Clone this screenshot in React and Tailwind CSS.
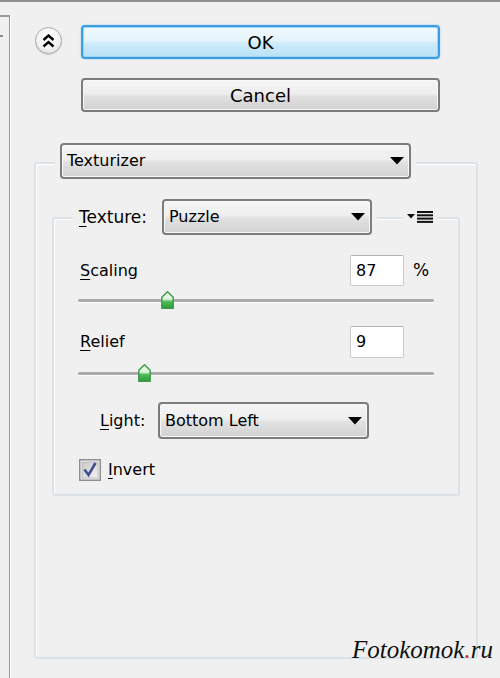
import React from "react";

const font = { fontFamily: '"DejaVu Sans", Verdana, sans-serif' };

function Arrow() {
  return (
    <svg width="14" height="8" viewBox="0 0 14 8" className="shrink-0">
      <path d="M0 0 H14 L7 7.5 Z" fill="#000" />
    </svg>
  );
}

function Select({ label, className }) {
  return (
    <div
      className={`flex items-center justify-between rounded-[4px] border-2 border-[#7c7c7c] bg-[linear-gradient(to_bottom,#f5f5f5_0%,#eeeeee_45%,#e0e0e0_55%,#d3d3d3_100%)] pl-[5px] pr-[5px] text-[16px] text-black shadow-[inset_0_0_0_1px_#f8f8f8] ${className}`}
    >
      <span className="leading-none">{label}</span>
      <Arrow />
    </div>
  );
}

function Thumb() {
  return (
    <svg width="13" height="18" viewBox="0 0 13 18">
      <defs>
        <linearGradient id="tg" x1="0" y1="0" x2="0" y2="1">
          <stop offset="0" stopColor="#f4fff4" />
          <stop offset="0.45" stopColor="#d8f2d8" />
          <stop offset="0.6" stopColor="#4dbb58" />
          <stop offset="1" stopColor="#2f9a3c" />
        </linearGradient>
      </defs>
      <path d="M6.5 0.8 L12.2 6.2 V17.2 H0.8 V6.2 Z" fill="url(#tg)" stroke="#3a9a45" strokeWidth="1.4" strokeLinejoin="round" />
    </svg>
  );
}

function Slider({ thumbClass }) {
  return (
    <div className="relative ml-[24px] flex h-[18px] w-[356px] items-center">
      <div className="h-[3px] w-full rounded-full bg-[#ababab] shadow-[0_1px_0_#ffffff]" />
      <div className={`absolute top-0 ${thumbClass}`}>
        <Thumb />
      </div>
    </div>
  );
}

function U({ c }) {
  return <span className="underline decoration-1 underline-offset-[3px]">{c}</span>;
}

export default function App() {
  return (
    <div
      className="relative flex h-[678px] w-[500px] overflow-hidden border-t-2 border-[#8e8e8e] bg-[#f0f0f0] text-black"
      style={font}
    >
      {/* left panel edge */}
      <div className="mt-[13px] w-[10px] shrink-0 border-t-2 border-r border-[#9a9a9a] shadow-[1px_0_0_#ffffff]">
        <div className="mt-[18px] h-[2px] w-[3px] bg-[#8a8a8a]" />
      </div>

      {/* main */}
      <div className="flex flex-col pl-[24px] pt-[23px]">
        {/* top buttons */}
        <div className="flex items-start">
          <div className="ml-[1px] mt-[2px] flex h-[27px] w-[27px] items-center justify-center rounded-full border border-[#a9a9a9] bg-[radial-gradient(circle_at_50%_35%,#ffffff_0%,#f3f3f3_55%,#d9d9d9_100%)] shadow-[0_1px_1px_rgba(0,0,0,0.15)]">
            <svg width="13" height="14" viewBox="0 0 13 14">
              <path d="M1.5 6 L6.5 1.5 L11.5 6" fill="none" stroke="#000" strokeWidth="2.4" />
              <path d="M1.5 12.5 L6.5 8 L11.5 12.5" fill="none" stroke="#000" strokeWidth="2.4" />
            </svg>
          </div>
          <div className="ml-[19px] flex flex-col">
            <div className="flex h-[34px] w-[359px] items-center justify-center rounded-[4px] border-2 border-[#3c9de0] bg-[linear-gradient(to_bottom,#f2faff_0%,#e3f4fd_45%,#cdeafa_55%,#b9e1f6_100%)] text-[18px] shadow-[inset_0_0_0_1px_#9fd5f5,0_0_2px_#8ccbf0]">
              OK
            </div>
            <div className="mt-[19px] flex h-[34px] w-[359px] items-center justify-center rounded-[4px] border-2 border-[#7c7c7c] bg-[linear-gradient(to_bottom,#f5f5f5_0%,#eeeeee_45%,#e0e0e0_55%,#d2d2d2_100%)] text-[18px] shadow-[inset_0_0_0_1px_#f8f8f8]">
              Cancel
            </div>
          </div>
        </div>

        {/* outer group box */}
        <div className="mt-[50px] flex h-[497px] w-[444px] flex-col rounded-[3px] border-2 border-[#dae2e8] shadow-[inset_1px_1px_0_#ffffff]">
          <div className="-mt-[21px] ml-[19px] self-start bg-[#f0f0f0] px-[5px]">
            <Select label="Texturizer" className="h-[36px] w-[351px]" />
          </div>

          {/* inner group box */}
          <div className="ml-[16px] mt-[38px] flex w-[408px] flex-col rounded-[3px] border-2 border-[#dae2e8] pb-[13px] shadow-[inset_1px_1px_0_#ffffff]">
            <div className="-mt-[20px] ml-[19px] flex h-[36px] items-center">
              <div className="flex items-center bg-[#f0f0f0] pl-[6px] pr-[5px]">
                <span className="w-[83px] text-[17px] leading-none">
                  <U c="T" />exture:
                </span>
                <Select label="Puzzle" className="h-[36px] w-[210px]" />
              </div>
              <div className="ml-[26px] bg-[#f0f0f0] px-[4px]">
                <svg width="26" height="12" viewBox="0 0 26 12" className="block">
                  <path d="M0 3 H8 L4 7.5 Z" fill="#111" />
                  <rect x="10" y="0" width="16" height="2" fill="#111" />
                  <rect x="10" y="3.3" width="16" height="2" fill="#111" />
                  <rect x="10" y="6.6" width="16" height="2" fill="#111" />
                  <rect x="10" y="9.9" width="16" height="2" fill="#111" />
                </svg>
              </div>
            </div>

            {/* Scaling */}
            <div className="mt-[20px] flex items-center pl-[26px]">
              <span className="w-[270px] text-[16px] leading-none">
                <U c="S" />caling
              </span>
              <div className="flex h-[31px] w-[54px] items-center rounded-[2px] border border-[#c9c9c9] border-t-[#b3b3b3] bg-white pl-[5px] text-[16px]">
                87
              </div>
              <span className="ml-[9px] text-[17px] leading-none">%</span>
            </div>
            <div className="mt-[5px]">
              <Slider thumbClass="left-[83px]" />
            </div>

            {/* Relief */}
            <div className="mt-[17px] flex items-center pl-[26px]">
              <span className="w-[270px] text-[16px] leading-none">
                <U c="R" />elief
              </span>
              <div className="flex h-[32px] w-[54px] items-center rounded-[2px] border border-[#c9c9c9] border-t-[#b3b3b3] bg-white pl-[5px] text-[16px]">
                9
              </div>
            </div>
            <div className="mt-[6px]">
              <Slider thumbClass="left-[60px]" />
            </div>

            {/* Light */}
            <div className="mt-[20px] flex items-center pl-[46px]">
              <span className="w-[58px] text-[16px] leading-none">
                <U c="L" />ight:
              </span>
              <Select label="Bottom Left" className="h-[37px] w-[211px]" />
            </div>

            {/* Invert */}
            <div className="mt-[20px] flex items-center pl-[25px]">
              <svg width="22" height="22" viewBox="0 0 22 22" className="shrink-0">
                <defs>
                  <linearGradient id="cb" x1="0" y1="0" x2="1" y2="1">
                    <stop offset="0" stopColor="#c8c8c8" />
                    <stop offset="1" stopColor="#f4f4f4" />
                  </linearGradient>
                </defs>
                <rect x="0.75" y="0.75" width="20.5" height="20.5" fill="#f6f6f6" stroke="#8e8f8f" strokeWidth="1.5" />
                <rect x="3" y="3" width="16" height="16" fill="url(#cb)" stroke="#b0b0b0" strokeWidth="0.8" />
                <path d="M5.5 10.5 L9.5 16 L16.5 4" fill="none" stroke="#3e4f97" strokeWidth="2.6" />
              </svg>
              <span className="ml-[7px] text-[16px] leading-none">
                <U c="I" />nvert
              </span>
            </div>
          </div>
        </div>
      </div>

      {/* watermark */}
      <div
        className="absolute left-[352px] top-[635px] text-[25px] italic leading-none text-[#111]"
        style={{ fontFamily: '"Liberation Serif", "DejaVu Serif", serif' }}
      >
        Fotokomok<span className="text-[#d4202a]">.</span>ru
      </div>
    </div>
  );
}
